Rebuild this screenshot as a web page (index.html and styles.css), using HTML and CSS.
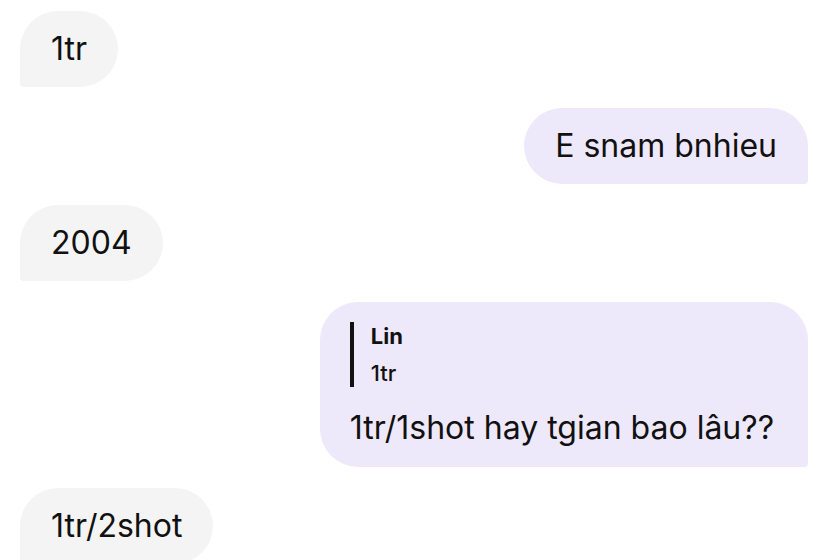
FILE: index.html
```html
<!DOCTYPE html>
<html>
<head>
<meta charset="utf-8">
<link rel="stylesheet" href="styles.css">
</head>
<body>
<div class="chat">
  <div class="row in"><div class="bubble grey">1tr</div></div>
  <div class="row out"><div class="bubble purple">E snam bnhieu</div></div>
  <div class="row in"><div class="bubble grey">2004</div></div>
  <div class="row out">
    <div class="bubble purple reply">
      <div class="quote">
        <div class="qname">Lin</div>
        <div class="qtext">1tr</div>
      </div>
      <div class="main">1tr/1shot hay tgian bao lâu??</div>
    </div>
  </div>
  <div class="row in"><div class="bubble grey">1tr/2shot</div></div>
</div>
</body>
</html>
```
FILE: styles.css
```css
html, body {
  margin: 0;
  padding: 0;
  background: #ffffff;
  overflow: hidden;
}
body {
  font-family: Inter, "Noto Sans", sans-serif;
  color: #111111;
}
.chat {
  display: flex;
  flex-direction: column;
  gap: 21px;
  padding: 11px 20px 0 20px;
}
.row {
  display: flex;
}
.row.in { justify-content: flex-start; }
.row.out { justify-content: flex-end; }
.bubble {
  box-sizing: border-box;
  min-height: 76px;
  display: flex;
  align-items: center;
  padding: 0 31px 0 31px;
  font-size: 32px;
  line-height: 38px;
  border-radius: 38px;
}
.grey {
  background: #f4f4f4;
  border-bottom-left-radius: 4px;
}
.purple {
  background: #eee8fb;
  border-bottom-right-radius: 4px;
}
.reply {
  flex-direction: column;
  align-items: flex-start;
  padding: 20px 34px 20px 30px;
}
.quote {
  border-left: 4px solid #111111;
  padding-left: 17px;
  display: flex;
  flex-direction: column;
  gap: 9px;
  margin-bottom: 22px;
}
.qname {
  font-weight: 700;
  font-size: 22px;
  line-height: 28px;
}
.qtext {
  font-weight: 500;
  font-size: 22px;
  line-height: 28px;
}
.main {
  font-size: 32px;
  line-height: 38px;
}
```
